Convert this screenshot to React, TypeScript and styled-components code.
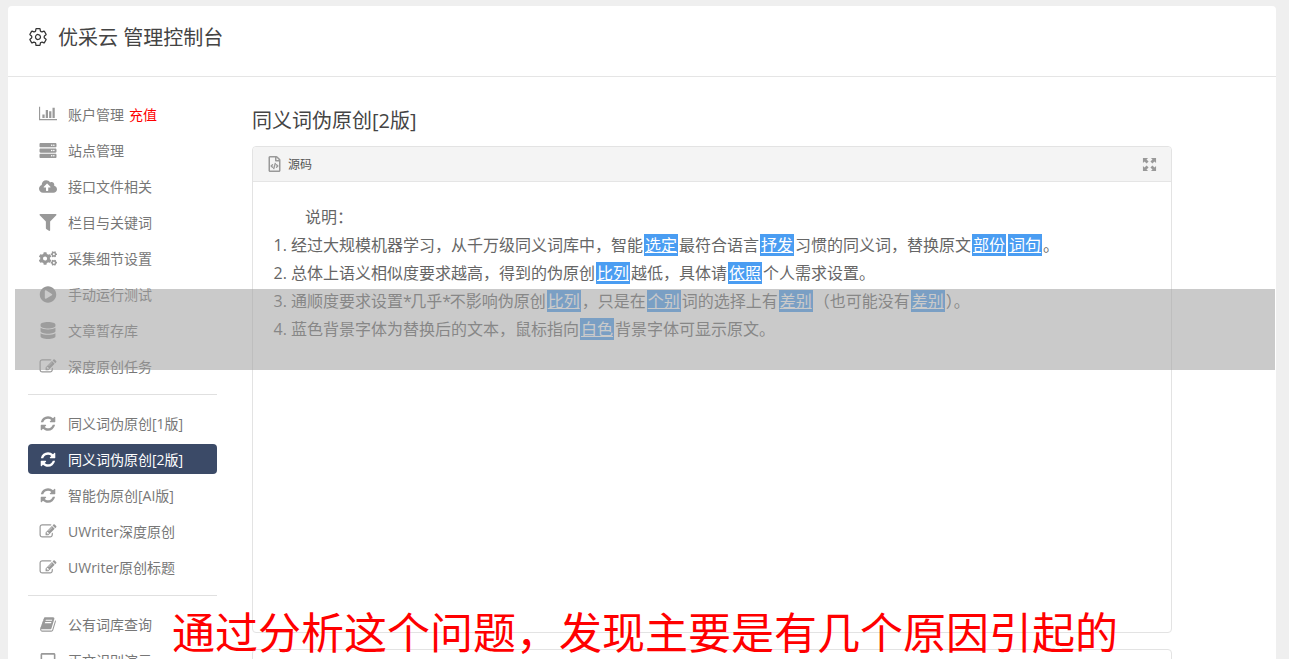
import React from 'react';
import styled, { createGlobalStyle } from 'styled-components';
import { FaServer, FaCloudUploadAlt, FaFilter, FaCogs, FaPlayCircle, FaDatabase, FaRegFileCode, FaRegSquare } from 'react-icons/fa';
import { IoSettingsOutline } from 'react-icons/io5';

const GlobalStyle = createGlobalStyle`
  html, body {
    margin: 0;
    height: 100%;
    overflow: hidden;
    background: #efefef;
  }
  body {
    font-family: "Open Sans", "Noto Sans CJK SC", sans-serif;
    color: #676a6c;
  }
`;

const Page = styled.div`
  position: relative;
  height: 659px;
  overflow: hidden;
  padding: 6px 13px 0 8px;
  box-sizing: border-box;
`;

const Card = styled.div`
  background: #fff;
  border-radius: 4px;
  min-height: 700px;
`;

const CardHeader = styled.header`
  display: flex;
  align-items: center;
  gap: 10px;
  height: 71px;
  padding: 0 0 9px 20px;
  box-sizing: border-box;
  border-bottom: 1px solid #e5e5e5;
  font-size: 20px;
  color: #444;

  svg {
    font-size: 20px;
    color: #333;
  }
`;

const CardBody = styled.div`
  display: flex;
  align-items: flex-start;
  padding: 22px 0 0 20px;
`;

const Sidebar = styled.nav`
  width: 189px;
  flex: none;
  margin-right: 35px;
`;

const NavGroup = styled.div`
  display: flex;
  flex-direction: column;
  gap: 6px;
`;

const NavItem = styled.a<{ $active?: boolean }>`
  display: flex;
  align-items: center;
  gap: 11px;
  height: 30px;
  padding-left: 11px;
  border-radius: 4px;
  font-size: 14px;
  white-space: nowrap;
  color: ${(p) => (p.$active ? '#fff' : '#777')};
  background: ${(p) => (p.$active ? '#3b4a67' : 'transparent')};

  svg {
    flex: none;
    width: 18px;
    height: 17px;
    color: ${(p) => (p.$active ? '#fff' : '#999')};
  }
`;

const Recharge = styled.span`
  color: #f00;
  margin-left: 5px;
`;

const Divider = styled.hr`
  margin: 13px 0;
  border: 0;
  border-top: 1px solid #e0e0e0;
`;

const Main = styled.main`
  width: 920px;
  flex: none;
`;

const Title = styled.h2`
  margin: 0 0 3px;
  height: 44px;
  line-height: 44px;
  font-size: 20px;
  font-weight: 400;
  color: #444;
`;

const Panel = styled.section<{ $tall?: boolean }>`
  border: 1px solid #e3e3e3;
  border-radius: 4px;
  height: ${(p) => (p.$tall ? '487px' : '60px')};
  box-sizing: border-box;
  margin-bottom: 16px;
  background: #fff;
`;

const PanelHead = styled.div`
  display: flex;
  align-items: center;
  gap: 7px;
  height: 34px;
  padding: 0 14px 0 15px;
  background: #f4f4f4;
  border-bottom: 1px solid #e5e5e5;
  border-radius: 4px 4px 0 0;
  font-size: 12px;
  color: #555;

  svg {
    color: #999;
    width: 13px;
    height: 16px;
  }
`;

const ExpandSvg = styled.svg`
  margin-left: auto;
  && {
    width: 15px;
    height: 15px;
  }
`;

const Content = styled.div`
  padding: 21px 0 0 0;
  font-size: 16px;
  line-height: 28px;
  color: #666;
`;

const Intro = styled.p`
  margin: 0;
  padding-left: 52px;
`;

const Steps = styled.ol`
  margin: 0;
  padding: 0 0 0 38px;
`;

const Swap = styled.span`
  background: #4a9df2;
  color: #fff;
  padding: 0 1px;
  margin: 0 1px;
  text-decoration: underline;
`;

const Star = styled.span`
  letter-spacing: -1.5px;
`;

const Band = styled.div`
  position: absolute;
  left: 15px;
  top: 289px;
  width: 1260px;
  height: 81px;
  background: rgba(160, 160, 160, 0.56);
`;

const Caption = styled.div`
  position: absolute;
  left: 172px;
  top: 600px;
  font-size: 43px;
  line-height: 60px;
  white-space: nowrap;
  color: #f00;
  font-family: "Noto Sans CJK SC", sans-serif;
`;

const ChartIcon = () => (
  <svg viewBox="0 0 2048 1792" fill="currentColor">
    <path d="M640 896v384h-256v-384h256zm384-512v896h-256v-896h256zm1024 1024v128h-2048v-1536h128v1408h1920zm-640-896v768h-256v-768h256zm384-384v1152h-256v-1152h256z" />
  </svg>
);

const RefreshIcon = () => (
  <svg viewBox="0 0 1792 1792" fill="currentColor">
    <path d="M1639 1056q0 5-1 7-64 268-268 434.5t-478 166.5q-146 0-282.5-55t-243.5-157l-129 129q-19 19-45 19t-45-19-19-45v-448q0-26 19-45t45-19h448q26 0 45 19t19 45-19 45l-137 137q71 66 161 102t187 36q134 0 250-65t186-179q11-17 53-117 8-23 30-23h192q13 0 22.5 9.5t9.5 22.5zm25-800v448q0 26-19 45t-45 19h-448q-26 0-45-19t-19-45 19-45l138-138q-148-137-349-137-134 0-250 65t-186 179q-11 17-53 117-8 23-30 23h-199q-13 0-22.5-9.5t-9.5-22.5v-7q65-268 270-434.5t480-166.5q146 0 284 55.5t245 156.5l130-129q19-19 45-19t45 19 19 45z" />
  </svg>
);

const EditIcon = () => (
  <svg viewBox="0 0 1792 1792" fill="currentColor">
    <path d="M888 1184l116-116-152-152-116 116v56h96v96h56zm440-720q-16-16-33 1l-350 350q-17 17-1 33t33-1l350-350q17-17 1-33zm80 594v190q0 119-84.5 203.5t-203.5 84.5h-832q-119 0-203.5-84.5t-84.5-203.5v-832q0-119 84.5-203.5t203.5-84.5h832q63 0 117 25 15 7 18 23 3 17-9 29l-49 49q-14 14-32 8-23-6-45-6h-832q-66 0-113 47t-47 113v832q0 66 47 113t113 47h832q66 0 113-47t47-113v-126q0-13 9-22l64-64q15-15 35-7t20 29zm-96-738l288 288-672 672h-288v-288zm444 132l-92 92-288-288 92-92q28-28 68-28t68 28l152 152q28 28 28 68t-28 68z" />
  </svg>
);

const BookIcon = () => (
  <svg viewBox="0 0 1792 1792" fill="currentColor">
    <path d="M1703 478q40 57 18 129l-275 906q-19 64-76.5 107.5t-122.5 43.5h-923q-77 0-148.5-53.5t-99.5-131.5q-24-67-2-127 0-4 3-27t4-37q1-8-3-21.5t-3-19.5q2-11 8-21t16.5-23.5 16.5-23.5q23-38 45-91.5t30-91.5q3-10 .5-30t-.5-28q3-11 17-28t17-23q21-36 42-92t25-90q1-9-2.5-32t.5-28q4-13 22-30.5t22-22.5q19-26 42.5-84.5t27.5-96.5q1-8-3-25.5t-2-26.5q2-8 9-18t18-23 17-21q8-12 16.5-30.5t15-35 16-36 19.5-32 26.5-23.5 36-11.5 47.5 5.5l-1 3q38-9 51-9h761q74 0 114 56t18 130l-274 906q-36 119-71.5 153.5t-128.5 34.5h-869q-27 0-38 15-11 16-1 43 24 70 144 70h923q29 0 56-15.5t35-41.5l300-987q7-22 5-57 38 15 59 43zm-1064 2q-4 13 2 22.5t20 9.5h608q13 0 25.5-9.5t16.5-22.5l21-64q4-13-2-22.5t-20-9.5h-608q-13 0-25.5 9.5t-16.5 22.5zm-83 256q-4 13 2 22.5t20 9.5h608q13 0 25.5-9.5t16.5-22.5l21-64q4-13-2-22.5t-20-9.5h-608q-13 0-25.5 9.5t-16.5 22.5z" />
  </svg>
);

// four corner arrows, fullscreen toggle of the panel
const ExpandIcon = () => (
  <ExpandSvg viewBox="0 0 16 16" fill="currentColor">
    <path d="M1 1h5.5L4.8 2.7 7 4.9 4.9 7 2.7 4.8 1 6.5zM15 1v5.5l-1.7-1.7L11.1 7 9 4.9l2.2-2.2L9.5 1zM1 15V9.5l1.7 1.7L4.9 9 7 11.1l-2.2 2.2L6.5 15zM15 15H9.5l1.7-1.7L9 11.1 11.1 9l2.2 2.2L15 9.5z" />
  </ExpandSvg>
);

const groups = [
  [
    { icon: <ChartIcon />, label: '账户管理', extra: '充值' },
    { icon: <FaServer />, label: '站点管理' },
    { icon: <FaCloudUploadAlt />, label: '接口文件相关' },
    { icon: <FaFilter />, label: '栏目与关键词' },
    { icon: <FaCogs />, label: '采集细节设置' },
    { icon: <FaPlayCircle />, label: '手动运行测试' },
    { icon: <FaDatabase />, label: '文章暂存库' },
    { icon: <EditIcon />, label: '深度原创任务' },
  ],
  [
    { icon: <RefreshIcon />, label: '同义词伪原创[1版]' },
    { icon: <RefreshIcon />, label: '同义词伪原创[2版]', active: true },
    { icon: <RefreshIcon />, label: '智能伪原创[AI版]' },
    { icon: <EditIcon />, label: 'UWriter深度原创' },
    { icon: <EditIcon />, label: 'UWriter原创标题' },
  ],
  [
    { icon: <BookIcon />, label: '公有词库查询' },
    { icon: <FaRegSquare />, label: '正文识别演示' },
  ],
];

export default function App() {
  return (
    <Page>
      <GlobalStyle />
      <Card>
        <CardHeader>
          <IoSettingsOutline />
          优采云 管理控制台
        </CardHeader>
        <CardBody>
          <Sidebar>
            {groups.map((group, i) => (
              <React.Fragment key={i}>
                {i > 0 && <Divider />}
                <NavGroup>
                  {group.map((item) => (
                    <NavItem key={item.label} $active={item.active}>
                      {item.icon}
                      <span>
                        {item.label}
                        {item.extra && <Recharge>{item.extra}</Recharge>}
                      </span>
                    </NavItem>
                  ))}
                </NavGroup>
              </React.Fragment>
            ))}
          </Sidebar>
          <Main>
            <Title>同义词伪原创[2版]</Title>
            <Panel $tall>
              <PanelHead>
                <FaRegFileCode />
                源码
                <ExpandIcon />
              </PanelHead>
              <Content>
                <Intro>说明：</Intro>
                <Steps>
                  <li>
                    经过大规模机器学习，从千万级同义词库中，智能<Swap>选定</Swap>最符合语言<Swap>抒发</Swap>习惯的同义词，替换原文<Swap>部份</Swap><Swap>词句</Swap>。
                  </li>
                  <li>
                    总体上语义相似度要求越高，得到的伪原创<Swap>比列</Swap>越低，具体请<Swap>依照</Swap>个人需求设置。
                  </li>
                  <li>
                    通顺度要求设置<Star>*</Star>几乎<Star>*</Star>不影响伪原创<Swap>比列</Swap>，只是在<Swap>个别</Swap>词的选择上有<Swap>差别</Swap>（也可能没有<Swap>差别</Swap>）。
                  </li>
                  <li>
                    蓝色背景字体为替换后的文本，鼠标指向<Swap>白色</Swap>背景字体可显示原文。
                  </li>
                </Steps>
              </Content>
            </Panel>
            <Panel />
          </Main>
        </CardBody>
      </Card>
      <Band />
      <Caption>通过分析这个问题，发现主要是有几个原因引起的</Caption>
    </Page>
  );
}
